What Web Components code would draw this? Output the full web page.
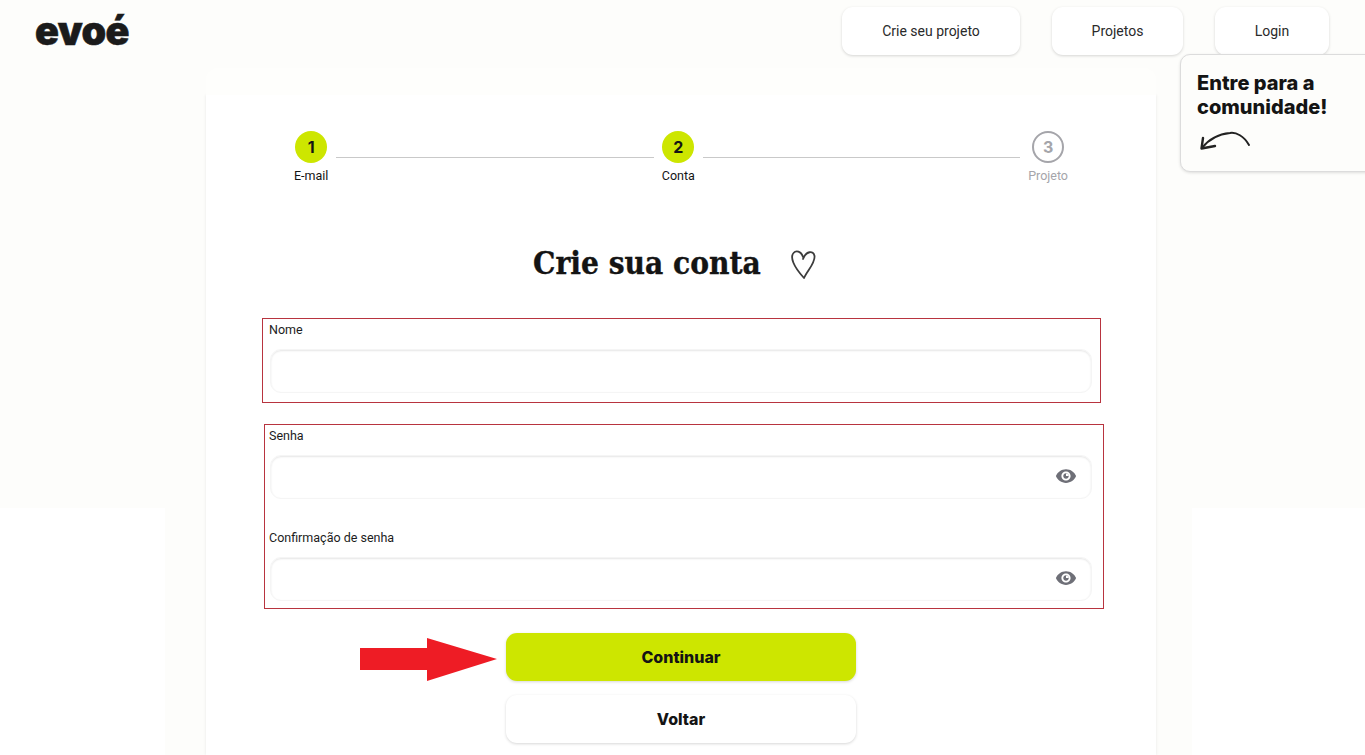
<!DOCTYPE html>
<html lang="pt-BR">
<head>
<meta charset="utf-8">
<title>evoé</title>
<style>
html,body{margin:0;padding:0;background:#fff}
body{font-family:Roboto,"Noto Sans",sans-serif;color:#141414}
</style>
</head>
<body>
<evo-page>
  <evo-header slot="header">
    <evo-nav-button style="width:178px">Crie seu projeto</evo-nav-button>
    <evo-nav-button style="width:131px">Projetos</evo-nav-button>
    <evo-nav-button style="width:114px">Login</evo-nav-button>
  </evo-header>
  <evo-tooltip slot="tooltip">Entre para a<br>comunidade!</evo-tooltip>
  <evo-card>
    <evo-stepper>
      <evo-step n="1" done>E-mail</evo-step>
      <evo-line></evo-line>
      <evo-step n="2" done>Conta</evo-step>
      <evo-line></evo-line>
      <evo-step n="3">Projeto</evo-step>
    </evo-stepper>
    <evo-title>Crie sua conta</evo-title>
    <evo-mark style="margin-left:56px;width:830px;padding:4px 0 9px 7px;margin-bottom:21px">
      <evo-field label="Nome"></evo-field>
    </evo-mark>
    <evo-mark style="margin-left:58px;width:833px;padding:4px 0 7px 5px;margin-bottom:24px">
      <evo-field label="Senha" eye style="margin-bottom:32px"></evo-field>
      <evo-field label="Confirmação de senha" eye></evo-field>
    </evo-mark>
    <evo-button primary arrow style="margin-bottom:14px">Continuar</evo-button>
    <evo-button>Voltar</evo-button>
  </evo-card>
</evo-page>
<script>
function def(name, html, init){
  customElements.define(name, class extends HTMLElement{
    constructor(){super();this.attachShadow({mode:'open'}).innerHTML=html;}
    connectedCallback(){ if(init) init(this); }
  });
}
def('evo-page',`<style>
:host{display:block;position:relative;width:100%;height:755px;overflow:hidden;
 background:
  linear-gradient(#fdfdfb,#fdfdfb) 0 0/100% 508px no-repeat,
  linear-gradient(#fdfdfb,#fdfdfb) 165px 0/1027px 100% no-repeat,#fff}
main{padding-left:206px}
</style><slot name="header"></slot><slot name="tooltip"></slot><main><slot></slot></main>`);
def('evo-header',`<style>
:host{display:flex;height:68px;box-sizing:border-box;padding:7px 36px 0 35px;align-items:flex-start}
.logo{font:900 39.500px/40px Inter,sans-serif;color:#1b1b1b;letter-spacing:-.6px;height:48px;display:flex;align-items:center;margin-right:auto;-webkit-text-stroke:.6px #1b1b1b}
nav{display:flex;gap:32px}
</style><div class="logo">evoé</div><nav><slot></slot></nav>`);
def('evo-nav-button',`<style>
:host{display:flex;height:48px;align-items:center;justify-content:center;background:#fff;border-radius:11px;
 box-shadow:0 1px 3px rgba(0,0,0,.16);font:400 14px Roboto,sans-serif;color:#2a2a2a}
</style><slot></slot>`);
def('evo-tooltip',`<style>
:host{position:absolute;left:1180px;top:54px;width:190px;height:118px;box-sizing:border-box;padding:16px 0 0 16px;
 background:#fdfdfb;border:1px solid #dcdcdc;border-radius:10px 0 0 10px;box-shadow:0 1px 3px rgba(0,0,0,.12);
 font:800 20px/24px Inter,sans-serif;color:#141414}
svg{display:block;margin:12px 0 0 1px}
</style><slot></slot><svg width="54" height="24" viewBox="0 0 54 24" fill="none" stroke="#222" stroke-width="2" stroke-linecap="round" stroke-linejoin="round"><path d="M51 14C46 5 38 1 32 2C21 3 11 8 4 17"/><path d="M5 7L3.500 17.500L17 15" stroke-width="2.400"/></svg>`);
def('evo-card',`<style>
:host{display:block;width:950px;height:687px;border-radius:12px 12px 0 0}
.band{position:relative;z-index:1;height:27px;border-radius:12px 12px 0 0;background:#fefefc}
.body{height:660px;box-sizing:border-box;padding-top:36px;background:#fff;box-shadow:0 0 3px rgba(0,0,0,.09)}
</style><div class="band"></div><div class="body"><slot></slot></div>`);
def('evo-stepper',`<style>
:host{display:flex;height:52px;padding:0 88px;align-items:flex-start}
</style><slot></slot>`);
def('evo-line',`<style>
:host{display:block;flex:1;height:1px;background:#c9c9c9;margin:26px 8px 0}
</style>`);
def('evo-step',`<style>
:host{display:flex;flex-direction:column;align-items:center;font:400 12.500px/14px Roboto,sans-serif;color:#141414}
.c{width:32px;height:32px;border-radius:50%;box-sizing:border-box;display:flex;align-items:center;justify-content:center;
 font:700 16px Inter,sans-serif;margin-bottom:6px;background:#cde600;color:#141414}
:host(:not([done])){color:#a5a5aa}
:host(:not([done])) .c{background:#fff;border:2px solid #a5a5aa;color:#a5a5aa}
</style><div class="c"></div><slot></slot>`,el=>{el.shadowRoot.querySelector('.c').textContent=el.getAttribute('n');});
def('evo-title',`<style>
:host{display:flex;height:52px;margin:54px 0 29px;align-items:center;padding-left:327px;
 font:700 31.300px/52px "DejaVu Serif",serif;font-stretch:condensed;color:#141414;white-space:nowrap;-webkit-text-stroke:.35px #141414}
svg{margin-left:29px;margin-top:2px;flex:none}
</style><slot></slot><svg width="27" height="32" viewBox="0 0 27 32" fill="none" stroke="#3c3c3c" stroke-width="1.800" stroke-linecap="round" stroke-linejoin="round"><path d="M13 9C11 3 6 2 3.500 5C0 9 3 18 14 30C17 23 25.500 15 24.500 8C23.500 2 16 3 13 11"/></svg>`);
def('evo-mark',`<style>
:host{display:block;border:1px solid #b8343f}
</style><slot></slot>`);
def('evo-field',`<style>
:host{display:block;width:822px}
label{display:block;margin-left:-1px;font:400 12.500px/14px Roboto,sans-serif;color:#1c1c1c;margin-bottom:12px}
.w{display:flex;align-items:center;height:44px;box-sizing:border-box;border:1px solid #f5f5f5;border-radius:11px;
 box-shadow:inset 0 1px 2px rgba(0,0,0,.1);background:#fff;padding-right:14px}
input{flex:1;min-width:0;border:0;outline:0;background:transparent;height:100%;padding:0 12px}
svg{flex:none;display:block;margin-bottom:2px}
</style><label></label><div class="w"><input type="text"></div>`,el=>{
  el.shadowRoot.querySelector('label').textContent=el.getAttribute('label');
  if(el.hasAttribute('eye')){
    el.shadowRoot.querySelector('.w').insertAdjacentHTML('beforeend',`<svg width="22" height="22" viewBox="0 0 24 24"><path fill="#6e6f77" fill-rule="evenodd" d="M12 4.500C7 4.500 2.730 7.610 1 12c1.730 4.390 6 7.500 11 7.500s9.270-3.110 11-7.500c-1.730-4.390-6-7.500-11-7.500zM12 17c-2.760 0-5-2.240-5-5s2.240-5 5-5 5 2.240 5 5-2.240 5-5 5zm0-8c-1.660 0-3 1.340-3 3s1.340 3 3 3 3-1.340 3-3-1.340-3-3-3z"/><path fill="#fff" d="M12 9.200a3 3 0 0 1 3 2.800h-3z"/></svg>`);
  }
});
def('evo-button',`<style>
:host{display:flex;position:relative;width:350px;height:48px;margin-left:300px;align-items:center;justify-content:center;border-radius:11px;
 background:#fff;box-shadow:0 1px 3px rgba(0,0,0,.16);font:800 16px Inter,sans-serif;color:#141414}
:host([primary]){background:#cde600}
svg{position:absolute;left:-146px;top:5px}
</style><slot></slot><span></span>`,el=>{
  if(el.hasAttribute('arrow')){
    el.shadowRoot.querySelector('span').innerHTML=`<svg width="137" height="43" viewBox="0 0 137 43"><path fill="#ee1c25" d="M0 10H67V0L137 21L67 43V32H0Z"/></svg>`;
  }
});
</script>
</body>
</html>
